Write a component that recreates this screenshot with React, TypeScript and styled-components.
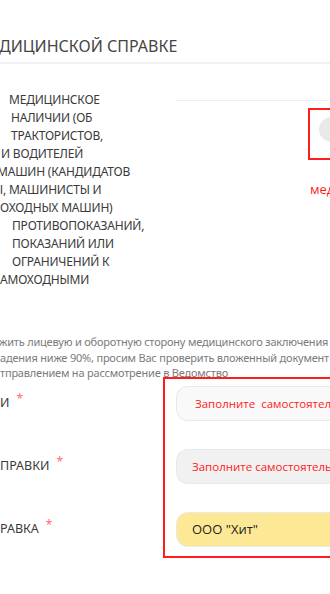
import React from "react";
import styled, { createGlobalStyle } from "styled-components";

const Global = createGlobalStyle`
  html, body { margin: 0; padding: 0; background: #fff; }
  body { overflow: hidden; }
`;

const Page = styled.div`
  width: 330px;
  height: 594px;
  overflow: hidden;
  background: #fff;
  font-family: "Noto Sans", "Open Sans", sans-serif;
  color: #3c3c3c;
`;

const Title = styled.h2`
  margin: 0;
  padding: 36px 0 6px;
  line-height: 20px;
  font-size: 16px;
  font-weight: 400;
  color: #454545;
  white-space: nowrap;
  border-bottom: 2px solid #f1f1f1;
  text-indent: -1px;
`;

const Question = styled.section`
  display: grid;
  grid-template-columns: 176px 1fr;
`;

const QuestionText = styled.div`
  padding-top: 27px;
  font-size: 12px;
  letter-spacing: -0.2px;
  line-height: 18px;
  color: #3a3a3a;
  white-space: nowrap;
`;

const Line = styled.div<{ $shift: number }>`
  margin-left: ${(p) => p.$shift}px;
`;

const Answer = styled.div`
  display: flex;
  flex-direction: column;
  padding-top: 36px;
`;

const Rule = styled.div`
  height: 1px;
  background: #efefef;
`;

const ToggleFrame = styled.div`
  margin: 7px 0 0 132px;
  width: 60px;
  height: 41px;
  border: 2px solid #ff1d1d;
  border-right: none;
  padding: 7px 0 0 9px;
  box-sizing: content-box;
`;

const Knob = styled.div`
  width: 25px;
  height: 25px;
  border-radius: 50%;
  background: #e9e9e9;
`;

const ErrorText = styled.div`
  margin: 20px 0 0 134px;
  font-family: "Open Sans", "Noto Sans", sans-serif;
  font-size: 13px;
  line-height: 18px;
  color: #ff1a1a;
  white-space: nowrap;
`;

const Hint = styled.p`
  margin: 45px 0 0;
  font-size: 11px;
  letter-spacing: -0.2px;
  line-height: 15.5px;
  color: #7b7b7b;
  white-space: nowrap;
`;

const Form = styled.section`
  display: grid;
  grid-template-columns: 163px 1fr;
  margin-top: -4px;
`;

const Labels = styled.div`
  display: flex;
  flex-direction: column;
  gap: 28px;
  padding-top: 9px;
`;

const Label = styled.div`
  height: 35px;
  display: flex;
  align-items: center;
  padding-bottom: 1px;
  box-sizing: border-box;
  font-size: 12.5px;
  color: #3a3a3a;
  white-space: nowrap;
`;

const Star = styled.span`
  color: #ff6e6e;
  font-size: 12px;
  margin-left: 7px;
  position: relative;
  top: -4px;
`;

const Fields = styled.div`
  display: flex;
  flex-direction: column;
  gap: 28px;
  border: 2px solid #ff1d1d;
  border-right: none;
  padding: 7px 0 9px 11px;
`;

const Field = styled.div<{ $bg: string; $indent: number; $error?: boolean }>`
  height: 35px;
  box-sizing: border-box;
  border: 1px solid #e9e9e9;
  border-right: none;
  border-radius: 12px 0 0 12px;
  background: ${(p) => p.$bg};
  display: flex;
  align-items: center;
  padding-left: ${(p) => p.$indent}px;
  font-family: "Open Sans", "Noto Sans", sans-serif;
  font-size: ${(p) => (p.$error ? "11.5px" : "13px")};
  color: ${(p) => (p.$error ? "#ff1a1a" : "#222")};
  white-space: pre;
  overflow: hidden;
`;

const questionLines: [string, number][] = [
  ["МЕДИЦИНСКОЕ", 9],
  ["НАЛИЧИИ (ОБ", 11],
  ["ТРАКТОРИСТОВ,", 11],
  ["И ВОДИТЕЛЕЙ", 1],
  ["МАШИН (КАНДИДАТОВ", -3],
  ["Ы, МАШИНИСТЫ И", -7],
  ["ОХОДНЫХ МАШИН)", 0],
  ["ПРОТИВОПОКАЗАНИЙ,", 12],
  ["ПОКАЗАНИЙ ИЛИ", 12],
  ["ОГРАНИЧЕНИЙ К", 12],
  ["АМОХОДНЫМИ", 0],
];

const hintLines: [string, number][] = [
  ["жить лицевую и оборотную сторону медицинского заключения", -1],
  ["адения ниже 90%, просим Вас проверить вложенный документ", 0],
  ["тправлением на рассмотрение в Ведомство", 0],
];

export default function App() {
  return (
    <Page>
      <Global />
      <Title>ДИЦИНСКОЙ СПРАВКЕ</Title>
      <Question>
        <QuestionText>
          {questionLines.map(([t, s], i) => (
            <Line key={i} $shift={s}>
              {t}
            </Line>
          ))}
        </QuestionText>
        <Answer>
          <Rule />
          <ToggleFrame>
            <Knob />
          </ToggleFrame>
          <ErrorText>медицинская справка обязательна</ErrorText>
        </Answer>
      </Question>
      <Hint>
        {hintLines.map(([t, s], i) => (
          <Line key={i} $shift={s}>
            {t}
          </Line>
        ))}
      </Hint>
      <Form>
        <Labels>
          <Label>
            И<Star>*</Star>
          </Label>
          <Label>
            ПРАВКИ<Star>*</Star>
          </Label>
          <Label>
            РАВКА<Star>*</Star>
          </Label>
        </Labels>
        <Fields>
          <Field $bg="#f9f9f9" $indent={18} $error>
            {"Заполните  самостоятельно"}
          </Field>
          <Field $bg="#f1f1f1" $indent={15} $error>
            Заполните самостоятельно
          </Field>
          <Field $bg="#fde995" $indent={15}>
            ООО "Хит"
          </Field>
        </Fields>
      </Form>
    </Page>
  );
}
